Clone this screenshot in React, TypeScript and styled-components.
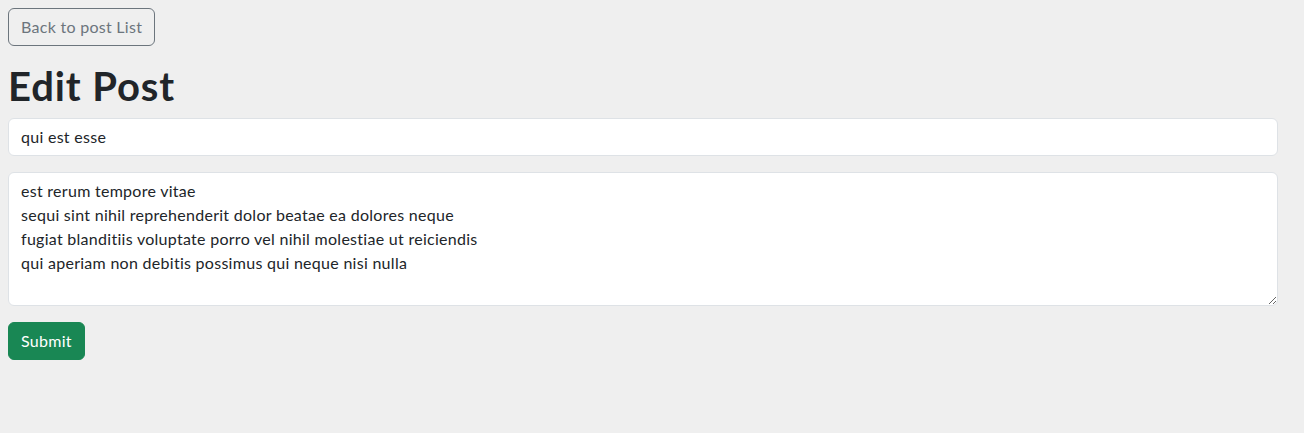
import React from 'react';
import styled, { createGlobalStyle } from 'styled-components';

const GlobalStyle = createGlobalStyle`
  *, *::before, *::after {
    box-sizing: border-box;
  }
  body {
    margin: 0;
    background: rgb(239, 239, 239);
    color: rgb(33, 37, 41);
    font-family: Lato, "Noto Sans", sans-serif;
    font-size: 16px;
    line-height: 1.5;
    letter-spacing: 0.28px;
  }
`;

const Page = styled.div`
  padding: 8px 26px 8px 8px;
`;

const Button = styled.button<{ $variant: 'outline' | 'success' }>`
  display: inline-block;
  font-family: inherit;
  font-size: 16px;
  line-height: 24px;
  letter-spacing: inherit;
  padding: 6px 12px;
  border-radius: 6px;
  cursor: pointer;
  border: 1px solid ${(p) => (p.$variant === 'success' ? 'rgb(25, 135, 84)' : 'rgb(108, 117, 125)')};
  background: ${(p) => (p.$variant === 'success' ? 'rgb(25, 135, 84)' : 'transparent')};
  color: ${(p) => (p.$variant === 'success' ? 'rgb(255, 255, 255)' : 'rgb(108, 117, 125)')};
`;

const TopBar = styled.div`
  margin-bottom: 16px;
`;

const Title = styled.h1`
  margin: 0 0 8px;
  font-size: 40px;
  font-weight: 700;
  line-height: 1.2;
  letter-spacing: 0.9px;
`;

const Form = styled.form`
  display: flex;
  flex-direction: column;
  align-items: flex-start;
  gap: 16px;
`;

const fieldCss = `
  display: block;
  width: 100%;
  font-family: inherit;
  font-size: 16px;
  line-height: 24px;
  letter-spacing: inherit;
  color: rgb(33, 37, 41);
  background: rgb(255, 255, 255);
  border: 1px solid rgb(222, 226, 230);
  border-radius: 6px;
  padding: 6px 12px;
  outline: none;
`;

const TitleInput = styled.input`
  ${fieldCss}
`;

const BodyInput = styled.textarea`
  ${fieldCss}
  resize: vertical;
`;

const post = {
  title: 'qui est esse',
  body:
    'est rerum tempore vitae\nsequi sint nihil reprehenderit dolor beatae ea dolores neque\nfugiat blanditiis voluptate porro vel nihil molestiae ut reiciendis\nqui aperiam non debitis possimus qui neque nisi nulla',
};

const App: React.FC = () => {
  return (
    <>
      <GlobalStyle />
      <Page>
        <TopBar>
          <Button type="button" $variant="outline">
            Back to post List
          </Button>
        </TopBar>
        <Title>Edit Post</Title>
        <Form onSubmit={(e) => e.preventDefault()}>
          <TitleInput type="text" defaultValue={post.title} />
          <BodyInput rows={5} defaultValue={post.body} />
          <Button type="submit" $variant="success">
            Submit
          </Button>
        </Form>
      </Page>
    </>
  );
};

export default App;
